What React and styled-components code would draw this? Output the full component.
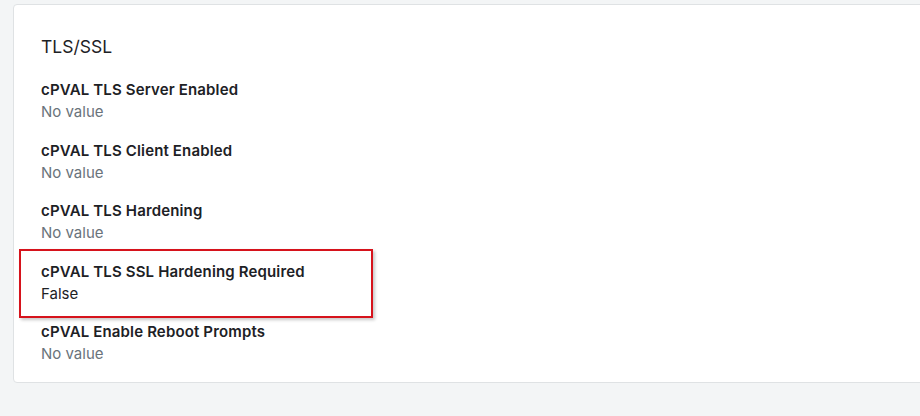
import React from "react";
import styled, { createGlobalStyle } from "styled-components";

const Global = createGlobalStyle`
  html, body { margin: 0; padding: 0; background: #f3f5f6; }
  body { font-family: Inter, "Noto Sans", Arial, sans-serif; -webkit-font-smoothing: antialiased; }
  #root { width: 920px; height: 416px; overflow: hidden; }
`;

const Page = styled.div`
  padding: 4px 0 0 13px;
  height: 416px;
  box-sizing: border-box;
`;

const Card = styled.section`
  width: 940px;
  box-sizing: border-box;
  background: #ffffff;
  border: 1px solid #dfe2e4;
  border-radius: 4px;
  padding: 30px 0 17px 27px;
`;

const Title = styled.h2`
  margin: 0 0 20px;
  font-size: 17.5px;
  line-height: 24px;
  font-weight: 400;
  color: #1d2125;
`;

const List = styled.dl`
  margin: 0;
  display: flex;
  flex-direction: column;
  gap: 16.5px;
`;

const Item = styled.div`
  position: relative;
  display: flex;
  flex-direction: column;
  ${(p) =>
    p.$highlight &&
    `
    &::after {
      content: "";
      position: absolute;
      left: -22px;
      top: -12px;
      width: 354px;
      height: 69px;
      box-sizing: border-box;
      border: 2px solid #d6131c;
      box-shadow: 2px 2px 3px rgba(0, 0, 0, 0.22);
      pointer-events: none;
    }
  `}
`;

const Label = styled.dt`
  font-size: 15px;
  line-height: 22px;
  font-weight: 600;
  letter-spacing: 0.15px;
  color: #1d2125;
`;

const Value = styled.dd`
  margin: 0;
  font-size: 15px;
  line-height: 22px;
  font-weight: 400;
  color: ${(p) => (p.$muted ? "#6a737b" : "#1d2125")};
`;

const items = [
  { label: "cPVAL TLS Server Enabled", value: null },
  { label: "cPVAL TLS Client Enabled", value: null },
  { label: "cPVAL TLS Hardening", value: null },
  { label: "cPVAL TLS SSL Hardening Required", value: "False", highlight: true },
  { label: "cPVAL Enable Reboot Prompts", value: null },
];

export default function App() {
  return (
    <>
      <Global />
      <Page>
        <Card>
          <Title>TLS/SSL</Title>
          <List>
            {items.map((it) => (
              <Item key={it.label} $highlight={it.highlight}>
                <Label>{it.label}</Label>
                <Value $muted={!it.value}>{it.value || "No value"}</Value>
              </Item>
            ))}
          </List>
        </Card>
      </Page>
    </>
  );
}
